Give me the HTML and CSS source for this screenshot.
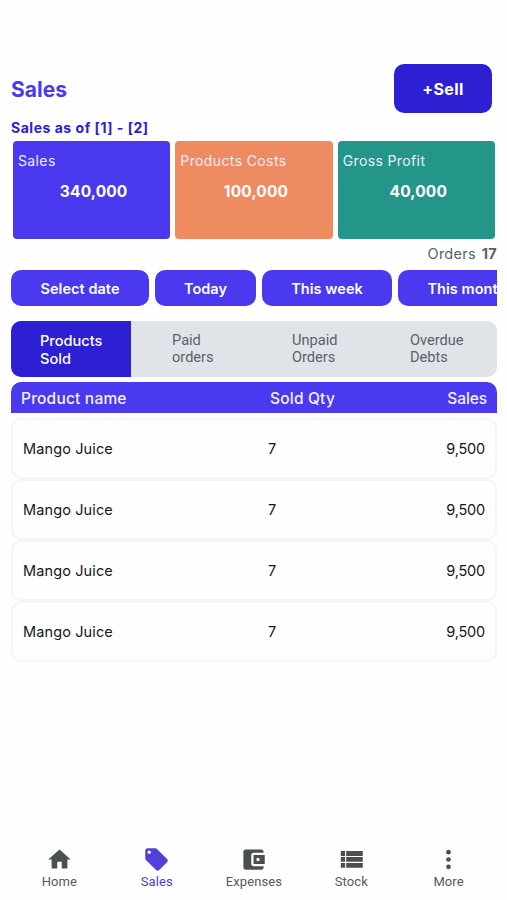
FILE: index.html
```
<!DOCTYPE html>
<html lang="en">
  <head>
    <meta charset="utf-8">
    <meta name="viewport" content="width=device-width, initial-scale=1">
    <title>Sales</title>
    <link rel="stylesheet" href="styles.css">
  </head>
  <body>
    <main class="page">
      <header class="top">
        <h1 class="title">Sales</h1>
        <button class="sell-btn">+Sell</button>
      </header>

      <h2 class="period">Sales as of [1] - [2]</h2>

      <!-- summary cards -->
      <section class="cards">
        <div class="card card-sales">
          <div class="card-label">Sales</div>
          <div class="card-value">340,000</div>
        </div>
        <div class="card card-costs">
          <div class="card-label">Products Costs</div>
          <div class="card-value">100,000</div>
        </div>
        <div class="card card-profit">
          <div class="card-label">Gross Profit</div>
          <div class="card-value">40,000</div>
        </div>
      </section>

      <div class="orders"><span>Orders</span><b>17</b></div>

      <!-- date filters, scrolls sideways -->
      <div class="filters">
        <button class="filter filter-date">Select date</button>
        <button class="filter filter-today">Today</button>
        <button class="filter filter-week">This week</button>
        <button class="filter filter-month">This month</button>
      </div>

      <div class="tabs">
        <div class="tab active">Products<br>Sold</div>
        <div class="tab">Paid<br>orders</div>
        <div class="tab">Unpaid<br>Orders</div>
        <div class="tab">Overdue<br>Debts</div>
      </div>

      <div class="table-head">
        <span>Product name</span>
        <span>Sold Qty</span>
        <span class="right">Sales</span>
      </div>
      <div class="row"><span>Mango Juice</span><span>7</span><span class="right price">9,500</span></div>
      <div class="row"><span>Mango Juice</span><span>7</span><span class="right price">9,500</span></div>
      <div class="row"><span>Mango Juice</span><span>7</span><span class="right price">9,500</span></div>
      <div class="row"><span>Mango Juice</span><span>7</span><span class="right price">9,500</span></div>
    </main>

    <!-- bottom navigation -->
    <nav class="nav">
      <a class="nav-item">
        <svg viewBox="0 0 24 24"><path d="M10 20v-6h4v6h5v-8h3L12 3 2 12h3v8z"/></svg>
        <span>Home</span>
      </a>
      <a class="nav-item current">
        <svg viewBox="0 0 24 24"><path d="M21.41 11.58l-9-9C12.05 2.22 11.55 2 11 2H4c-1.1 0-2 .9-2 2v7c0 .55.22 1.05.59 1.42l9 9c.36.36.86.58 1.41.58s1.05-.22 1.41-.59l7-7c.37-.36.59-.86.59-1.41s-.23-1.06-.59-1.42zM5.5 7C4.67 7 4 6.33 4 5.500S4.67 4 5.5 4 7 4.67 7 5.5 6.33 7 5.5 7z"/></svg>
        <span>Sales</span>
      </a>
      <a class="nav-item">
        <svg viewBox="0 0 24 24"><path d="M21 18v1c0 1.1-.9 2-2 2H5c-1.110 0-2-.9-2-2V5c0-1.100.89-2 2-2h14c1.100 0 2 .9 2 2v1h-9c-1.110 0-2 .9-2 2v8c0 1.100.89 2 2 2h9zm-9-2h10V8H12v8zm4-2.500c-.83 0-1.500-.67-1.500-1.500s.67-1.500 1.500-1.500 1.500.67 1.500 1.500-.67 1.500-1.500 1.500z"/></svg>
        <span>Expenses</span>
      </a>
      <a class="nav-item">
        <svg viewBox="0 0 24 24"><path d="M2.500 4.500h3.800v4.300H2.500zM7.300 4.500h14.700v4.300H7.300zM2.500 9.800h3.800v4.300H2.500zM7.300 9.800h14.700v4.300H7.300zM2.500 15.100h3.800v4.300H2.500zM7.300 15.100h14.700v4.300H7.300z"/></svg>
        <span>Stock</span>
      </a>
      <a class="nav-item">
        <svg viewBox="0 0 24 24"><circle cx="12" cy="5.500" r="2.100"/><circle cx="12" cy="12" r="2.100"/><circle cx="12" cy="18.500" r="2.100"/></svg>
        <span>More</span>
      </a>
    </nav>
  </body>
</html>
```

FILE: styles.css
```
* {
  margin: 0;
  padding: 0;
  box-sizing: border-box;
}

body {
  height: 900px;
  display: flex;
  flex-direction: column;
  justify-content: space-between;
  overflow: hidden;
  background: #fefefe;
  font-family: Inter, "Open Sans", sans-serif;
}

button {
  border: none;
  font-family: inherit;
  color: #fff;
  white-space: nowrap;
}

.page {
  padding: 64px 10px 0 11px;
}

/* header */
.top {
  display: flex;
  justify-content: space-between;
  align-items: center;
  height: 49px;
  padding-right: 5px;
}

.title {
  padding-top: 2px;
  font-size: 21px;
  font-weight: 700;
  color: #4b39ef;
}

.sell-btn {
  width: 98px;
  height: 49px;
  border-radius: 10px;
  background: #2d20d3;
  font-size: 16px;
  font-weight: 700;
  letter-spacing: 0.4px;
}

.period {
  height: 28px;
  padding-top: 5px;
  line-height: 19px;
  font-size: 14px;
  font-weight: 700;
  letter-spacing: 0.52px;
  color: #2d20d3;
}

/* cards */
.cards {
  display: grid;
  grid-template-columns: repeat(3, 1fr);
  gap: 5px;
  padding: 0 2px;
}

.card {
  height: 98px;
  padding: 10px 5px;
  border-radius: 4px;
  color: #fff;
}

.card-sales { background: #4b39ef; }
.card-costs { background: #ee8b60; }
.card-profit { background: #249689; }

.card-label {
  line-height: 19px;
  font-size: 14px;
  letter-spacing: 0.38px;
  color: #eeecff;
}

.card-value {
  margin-top: 12px;
  padding-left: 4px;
  text-align: center;
  line-height: 20px;
  font-size: 15.5px;
  font-weight: 700;
  letter-spacing: 0.15px;
}

.orders {
  display: flex;
  justify-content: flex-end;
  gap: 6px;
  height: 31px;
  padding-top: 5px;
  line-height: 20px;
  font-size: 14.5px;
  letter-spacing: 0.25px;
  color: #57636c;
}

/* filters */
.filters {
  display: flex;
  gap: 6px;
  overflow: hidden;
}

.filter {
  flex: none;
  height: 36px;
  border-radius: 10px;
  background: #4b39ef;
  font-size: 14.5px;
  font-weight: 600;
  letter-spacing: 0.05px;
}

.filter-date { width: 138px; }
.filter-today { width: 101px; }
.filter-week { width: 130px; }
.filter-month { width: 138px; }

/* tabs */
.tabs {
  display: grid;
  grid-template-columns: 120px 120px 118px 128px;
  height: 56px;
  margin-top: 15px;
  border-radius: 10px;
  overflow: hidden;
  background: #e0e3e7;
}

.tab {
  padding: 11px 0 0 41px;
  line-height: 17px;
  font-family: Roboto, sans-serif;
  font-size: 14.6px;
  color: #57636c;
}

.tab.active {
  padding-left: 29px;
  background: #2d20d3;
  line-height: 18px;
  font-family: Inter, sans-serif;
  font-weight: 500;
  color: #fff;
}

/* table */
.table-head,
.row {
  display: grid;
  align-items: center;
}

.table-head {
  grid-template-columns: 249px 1fr auto;
  height: 31px;
  margin: 5px 0;
  padding: 1px 10px 0;
  border-radius: 10px 10px 0 0;
  background: #4b39ef;
  font-size: 15.5px;
  font-weight: 500;
  letter-spacing: 0.2px;
  color: #f4f2ff;
}

.table-head .right {
  letter-spacing: -0.1px;
}

.row {
  grid-template-columns: 245px 1fr auto;
  height: 61px;
  padding: 0 10px;
  border: 2px solid #f3f5f7;
  border-radius: 10px;
  background: #fefefe;
  font-size: 14.5px;
  letter-spacing: 0.12px;
  color: #14181b;
}

.right {
  text-align: right;
}

.price {
  letter-spacing: -0.2px;
}

/* bottom nav */
.nav {
  display: grid;
  grid-template-columns: repeat(5, 97.3px);
  justify-content: center;
  height: 54px;
}

.nav-item {
  display: flex;
  flex-direction: column;
  align-items: center;
  gap: 1px;
  padding-left: 1px;
  font-family: Roboto, sans-serif;
  font-size: 13px;
  line-height: 16px;
  letter-spacing: 0.1px;
  color: #57595b;
}

.nav-item svg {
  width: 27px;
  height: 27px;
  fill: #4c4f52;
}

.nav-item.current {
  color: #5040dc;
}

.nav-item.current svg {
  fill: #5040dc;
}
```
